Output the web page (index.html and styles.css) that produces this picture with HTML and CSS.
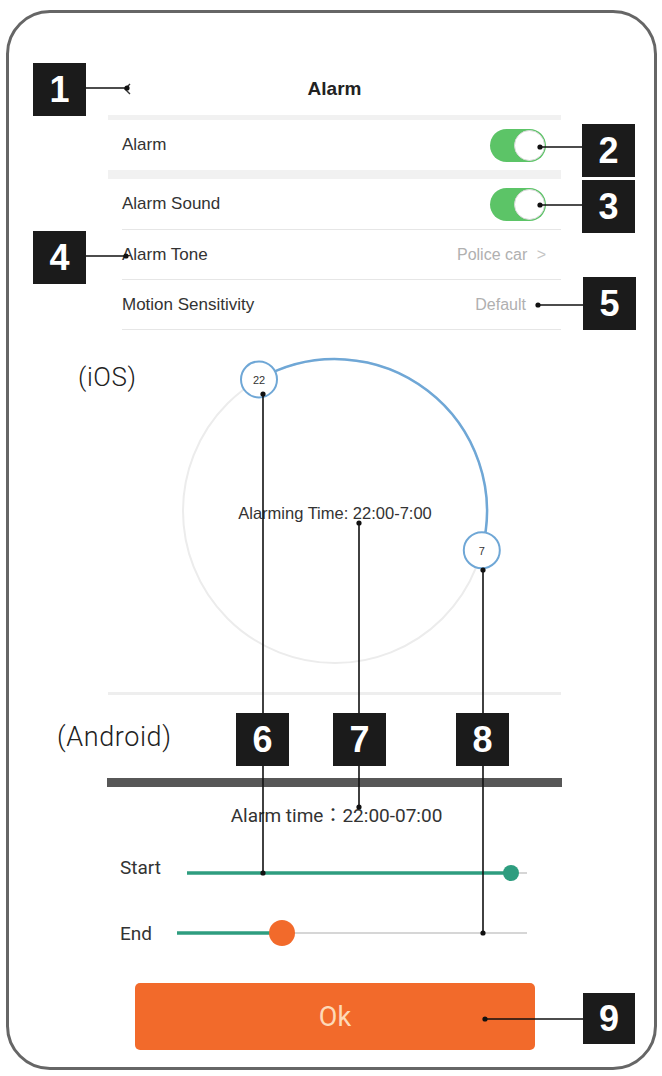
FILE: index.html
```html
<!DOCTYPE html>
<html>
<head>
<meta charset="utf-8">
<link rel="stylesheet" href="styles.css">
</head>
<body>
<div class="frame">
  <div class="screen">
    <div class="header">
      <svg class="back" width="9" height="12" viewBox="0 0 9 12"><path d="M7 1 L2 6 L7 11" fill="none" stroke="#333" stroke-width="1.4"/></svg>
      <div class="title">Alarm</div>
      <div></div>
    </div>
    <div class="band thin"></div>
    <div class="row"><span class="label">Alarm</span><span class="toggle"><span class="knob"></span></span></div>
    <div class="band thick"></div>
    <div class="row"><span class="label">Alarm Sound</span><span class="toggle"><span class="knob"></span></span></div>
    <div class="line"></div>
    <div class="row short"><span class="label">Alarm Tone</span><span class="value">Police car <span class="chev">&gt;</span></span></div>
    <div class="line"></div>
    <div class="row short"><span class="label">Motion Sensitivity</span><span class="value nochev">Default</span></div>
    <div class="line"></div>
  </div>

  <div class="ios">
    <div class="os-label ios-label">(iOS)</div>
    <svg class="dial" width="340" height="340" viewBox="0 0 340 340">
      <circle cx="170" cy="170" r="152" fill="none" stroke="#ececec" stroke-width="2"/>
      <path d="M94 38.4 A152 152 0 0 1 316.8 209.3" fill="none" stroke="#6fa7d6" stroke-width="2.5"/>
      <circle cx="94" cy="38.4" r="18" fill="#fff" stroke="#6fa7d6" stroke-width="2"/>
      <text x="94" y="39" class="knobtxt">22</text>
      <circle cx="316.8" cy="209.3" r="18" fill="#fff" stroke="#6fa7d6" stroke-width="2"/>
      <text x="316.8" y="210" class="knobtxt">7</text>
      <text x="170" y="172" class="dialtxt">Alarming Time: 22:00-7:00</text>
    </svg>
  </div>
  <div class="sep"></div>

  <div class="android">
    <div class="os-label android-label">(Android)</div>
    <div class="bar"></div>
    <div class="atime">Alarm time：22:00-07:00</div>
    <div class="slider start">
      <span class="slabel">Start</span>
      <svg width="340" height="30" viewBox="0 0 340 30">
        <line x1="0" y1="18" x2="340" y2="18" stroke="#d6d6d6" stroke-width="2"/>
        <line x1="0" y1="18" x2="324" y2="18" stroke="#2e9d7f" stroke-width="3.5"/>
        <circle cx="324" cy="18" r="8" fill="#2e9d7f"/>
      </svg>
    </div>
    <div class="slider end">
      <span class="slabel">End</span>
      <svg width="350" height="30" viewBox="0 0 350 30">
        <line x1="0" y1="15" x2="350" y2="15" stroke="#d6d6d6" stroke-width="2"/>
        <line x1="0" y1="15" x2="105" y2="15" stroke="#2e9d7f" stroke-width="3.5"/>
        <circle cx="105" cy="15" r="13" fill="#f26a2b"/>
      </svg>
    </div>
    <div class="okbtn">Ok</div>
  </div>
</div>

<div class="annot">
  <svg class="lines" width="662" height="1076" viewBox="0 0 662 1076">
    <g stroke="#111" stroke-width="1.6" fill="none">
      <line x1="86" y1="88" x2="128" y2="88"/>
      <line x1="540" y1="147" x2="582" y2="147"/>
      <line x1="540" y1="205" x2="582" y2="205"/>
      <line x1="86" y1="256" x2="126" y2="256"/>
      <line x1="538" y1="305" x2="583" y2="305"/>
      <line x1="263" y1="394" x2="263" y2="873"/>
      <line x1="359" y1="523" x2="359" y2="807"/>
      <line x1="483" y1="570" x2="483" y2="933"/>
      <line x1="485" y1="1019" x2="583" y2="1019"/>
    </g>
    <g fill="#111">
      <circle cx="127" cy="88" r="2.6"/>
      <circle cx="540" cy="147" r="2.6"/>
      <circle cx="540" cy="205" r="2.6"/>
      <circle cx="126" cy="256" r="2.6"/>
      <circle cx="538" cy="305" r="2.6"/>
      <circle cx="263" cy="394" r="2.6"/>
      <circle cx="263" cy="873" r="2.6"/>
      <circle cx="359" cy="523" r="2.6"/>
      <circle cx="359" cy="807" r="2.6"/>
      <circle cx="483" cy="570" r="2.6"/>
      <circle cx="483" cy="933" r="2.6"/>
      <circle cx="485" cy="1019" r="2.6"/>
    </g>
  </svg>
  <div class="badge b1">1</div>
  <div class="badge b2">2</div>
  <div class="badge b3">3</div>
  <div class="badge b4">4</div>
  <div class="badge b5">5</div>
  <div class="badge b6">6</div>
  <div class="badge b7">7</div>
  <div class="badge b8">8</div>
  <div class="badge b9">9</div>
</div>
</body>
</html>
```

FILE: styles.css
```css
html, body {
  margin: 0;
  padding: 0;
  background: #fff;
}
body {
  position: relative;
  width: 662px;
  height: 1076px;
  overflow: hidden;
  font-family: "Liberation Sans", Arial, sans-serif;
  color: #333;
}
.frame {
  box-sizing: border-box;
  margin: 10px 0 0 6px;
  width: 651px;
  height: 1060px;
  border: 3px solid #666;
  border-radius: 44px;
}
.screen {
  margin-left: 99px;
  width: 453px;
  padding-top: 49px;
}
.header {
  height: 53px;
  display: grid;
  grid-template-columns: 1fr auto 1fr;
  align-items: center;
}
.back {
  margin-left: 15px;
}
.title {
  font-weight: bold;
  font-size: 19px;
  color: #222;
}
.band {
  background: #f1f1f1;
}
.band.thin { height: 5px; }
.band.thick { height: 9px; }
.row {
  height: 50px;
  display: flex;
  align-items: center;
  justify-content: space-between;
  padding: 0 15px 0 14px;
}
.row.short { height: 49px; }
.label {
  font-size: 17px;
  color: #333;
}
.value {
  font-size: 16px;
  color: #b0b0b0;
}
.chev {
  margin-left: 5px;
  color: #c4c4c4;
}
.nochev {
  margin-right: 20px;
}
.toggle {
  box-sizing: border-box;
  width: 56px;
  height: 33px;
  border-radius: 17px;
  background: #5cc467;
  display: flex;
  align-items: center;
  justify-content: flex-end;
  padding: 1px;
}
.knob {
  box-sizing: border-box;
  width: 31px;
  height: 31px;
  border-radius: 50%;
  background: #fff;
  border: 1px solid #d8d8d8;
}
.line {
  height: 1px;
  background: #e6e6e6;
  margin-left: 14px;
}
.ios {
  padding-top: 11px;
  display: grid;
  grid-template-columns: 156px 340px;
  margin-bottom: 11px;
}
.os-label {
  font-family: Roboto, "Liberation Sans", sans-serif;
  font-weight: 300;
  color: #222;
  letter-spacing: 0.6px;
}
.ios-label {
  padding-left: 69px;
  padding-top: 22px;
  font-size: 26px;
  line-height: 28px;
}
.dial {
  display: block;
}
.knobtxt {
  font-family: "Liberation Sans", Arial, sans-serif;
  font-size: 11px;
  fill: #333;
  text-anchor: middle;
  dominant-baseline: central;
}
.dialtxt {
  font-family: "Liberation Sans", Arial, sans-serif;
  font-size: 16.5px;
  fill: #333;
  text-anchor: middle;
  dominant-baseline: central;
}
.sep {
  margin-left: 99px;
  width: 453px;
  height: 3px;
  background: #eeeeee;
}
.android-label {
  margin-left: 48px;
  margin-top: 27px;
  font-size: 27px;
  line-height: 30px;
}
.bar {
  margin-top: 26px;
  margin-left: 98px;
  width: 455px;
  height: 9px;
  background: #575757;
}
.atime {
  margin-top: 17px;
  margin-left: 101px;
  width: 453px;
  text-align: center;
  font-family: Roboto, "Liberation Sans", "Noto Sans CJK TC", sans-serif;
  font-size: 19px;
  line-height: 24px;
  color: #333;
}
.slider {
  height: 40px;
  display: flex;
  align-items: center;
  margin-left: 111px;
}
.slider svg { display: block; }
.slider.start { margin-top: 22px; }
.slider.end { margin-top: 23px; }
.slabel {
  font-family: Roboto, "Liberation Sans", sans-serif;
  font-size: 19px;
  color: #333;
}
.start .slabel { width: 67px; margin-bottom: 6px; }
.end .slabel { width: 57px; }
.okbtn {
  margin-top: 30px;
  margin-left: 126px;
  width: 400px;
  height: 67px;
  border-radius: 5px;
  background: #f26a2b;
  color: #fdd9b8;
  font-family: Roboto, "Liberation Sans", sans-serif;
  font-size: 27px;
  display: flex;
  align-items: center;
  justify-content: center;
}
.annot {
  position: absolute;
  left: 0;
  top: 0;
  width: 662px;
  height: 1076px;
  pointer-events: none;
}
.lines {
  position: absolute;
  left: 0;
  top: 0;
}
.badge {
  position: absolute;
  width: 53px;
  height: 53px;
  background: #1b1b1b;
  color: #fff;
  font-family: "Liberation Sans", Arial, sans-serif;
  font-weight: bold;
  font-size: 36px;
  display: flex;
  align-items: center;
  justify-content: center;
}
.b1 { left: 33px; top: 63px; }
.b2 { left: 582px; top: 124px; }
.b3 { left: 582px; top: 180px; }
.b4 { left: 33px; top: 231px; }
.b5 { left: 583px; top: 277px; }
.b6 { left: 236px; top: 713px; }
.b7 { left: 333px; top: 713px; }
.b8 { left: 456px; top: 713px; }
.b9 { left: 583px; top: 993px; width: 52px; height: 51px; }
```
